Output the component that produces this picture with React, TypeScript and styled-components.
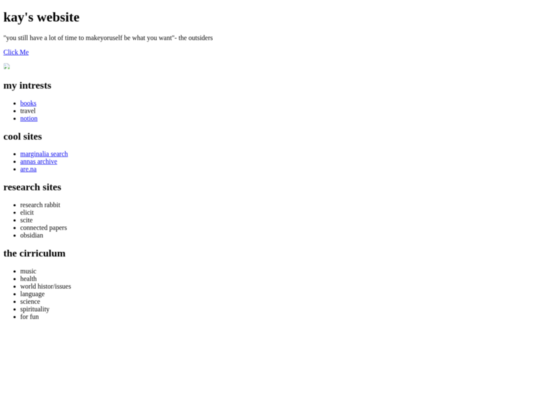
import { FC } from "react";
import styled, { createGlobalStyle } from "styled-components";

const GlobalStyle = createGlobalStyle`
  html, body {
    margin: 0;
    background: #fff;
  }
`;

const Styles = {
  Frame: styled.div`
    width: 540px;
    height: 405px;
    overflow: clip;
  `,
  // the reference is a 1280x960 page shrunk down to 540x405
  Page: styled.div`
    width: 1280px;
    height: 960px;
    background: #fff;
    transform: scale(0.421875);
    transform-origin: 0 0;
    will-change: transform;
  `,
  Content: styled.div`
    box-sizing: border-box;
    height: 100%;
    padding: 8px;
    font-family: "Liberation Serif", "Times New Roman", serif;
    font-size: 16px;
    color: #000;
    filter: blur(0.8px);
  `,
  Title: styled.h1`
    font-size: 32px;
    font-weight: 700;
    margin: 14.4px 0 21.44px;
  `,
  Heading: styled.h2`
    font-size: 24px;
    font-weight: 700;
    margin: 19.92px 0;
  `,
  Paragraph: styled.p`
    margin: 16px 0;
  `,
  Link: styled.a`
    color: #0000ee;
    text-decoration: underline;
  `,
  List: styled.ul`
    margin: 16px 0;
    padding-left: 40px;
  `,
  BrokenImage: styled.svg`
    display: inline-block;
    width: 16px;
    height: 16px;
  `,
};

interface Item {
  label: string;
  linked?: boolean;
}

interface Section {
  title: string;
  items: Item[];
}

const sections: Section[] = [
  {
    title: "my intrests",
    items: [
      { label: "books", linked: true },
      { label: "travel" },
      { label: "notion", linked: true },
    ],
  },
  {
    title: "cool sites",
    items: [
      { label: "marginalia search", linked: true },
      { label: "annas archive", linked: true },
      { label: "are.na", linked: true },
    ],
  },
  {
    title: "research sites",
    items: [
      { label: "research rabbit" },
      { label: "elicit" },
      { label: "scite" },
      { label: "connected papers" },
      { label: "obsidian" },
    ],
  },
  {
    title: "the cirriculum",
    items: [
      { label: "music" },
      { label: "health" },
      { label: "world histor/issues" },
      { label: "language" },
      { label: "science" },
      { label: "spirituality" },
      { label: "for fun" },
    ],
  },
];

const BrokenIcon: FC = () => (
  <Styles.BrokenImage viewBox="0 0 16 16">
    <path d="M1.5 1.5h9l4 4v3l-3 2-2-1.500-3 3-1 2.500h-4z" fill="#fff" stroke="#a9b4c2" />
    <path d="M10.500 1.500v4h4" fill="#e3e8ef" stroke="#a9b4c2" />
    <path d="M3 4h4v3h-4z" fill="#b9d3f2" />
    <path d="M2.500 12l3-3 2 2-2 2.500h-3z" fill="#4fa84a" />
    <path d="M10 14.500l1.500-2.500 3-2v4.500z" fill="#6cbf5a" />
  </Styles.BrokenImage>
);

const App: FC = () => {
  return (
    <Styles.Frame>
      <GlobalStyle />
      <Styles.Page>
        <Styles.Content>
          <Styles.Title>kay's website</Styles.Title>
          <Styles.Paragraph>
            "you still have a lot of time to makeyoruself be what you want"- the outsiders
          </Styles.Paragraph>
          <Styles.Paragraph>
            <Styles.Link href="#">Click Me</Styles.Link>
          </Styles.Paragraph>
          <Styles.Paragraph>
            <BrokenIcon />
          </Styles.Paragraph>
          {sections.map((section) => (
            <section key={section.title}>
              <Styles.Heading>{section.title}</Styles.Heading>
              <Styles.List>
                {section.items.map((item) => (
                  <li key={item.label}>
                    {item.linked ? (
                      <Styles.Link href="#">{item.label}</Styles.Link>
                    ) : (
                      item.label
                    )}
                  </li>
                ))}
              </Styles.List>
            </section>
          ))}
        </Styles.Content>
      </Styles.Page>
    </Styles.Frame>
  );
};

export default App;
